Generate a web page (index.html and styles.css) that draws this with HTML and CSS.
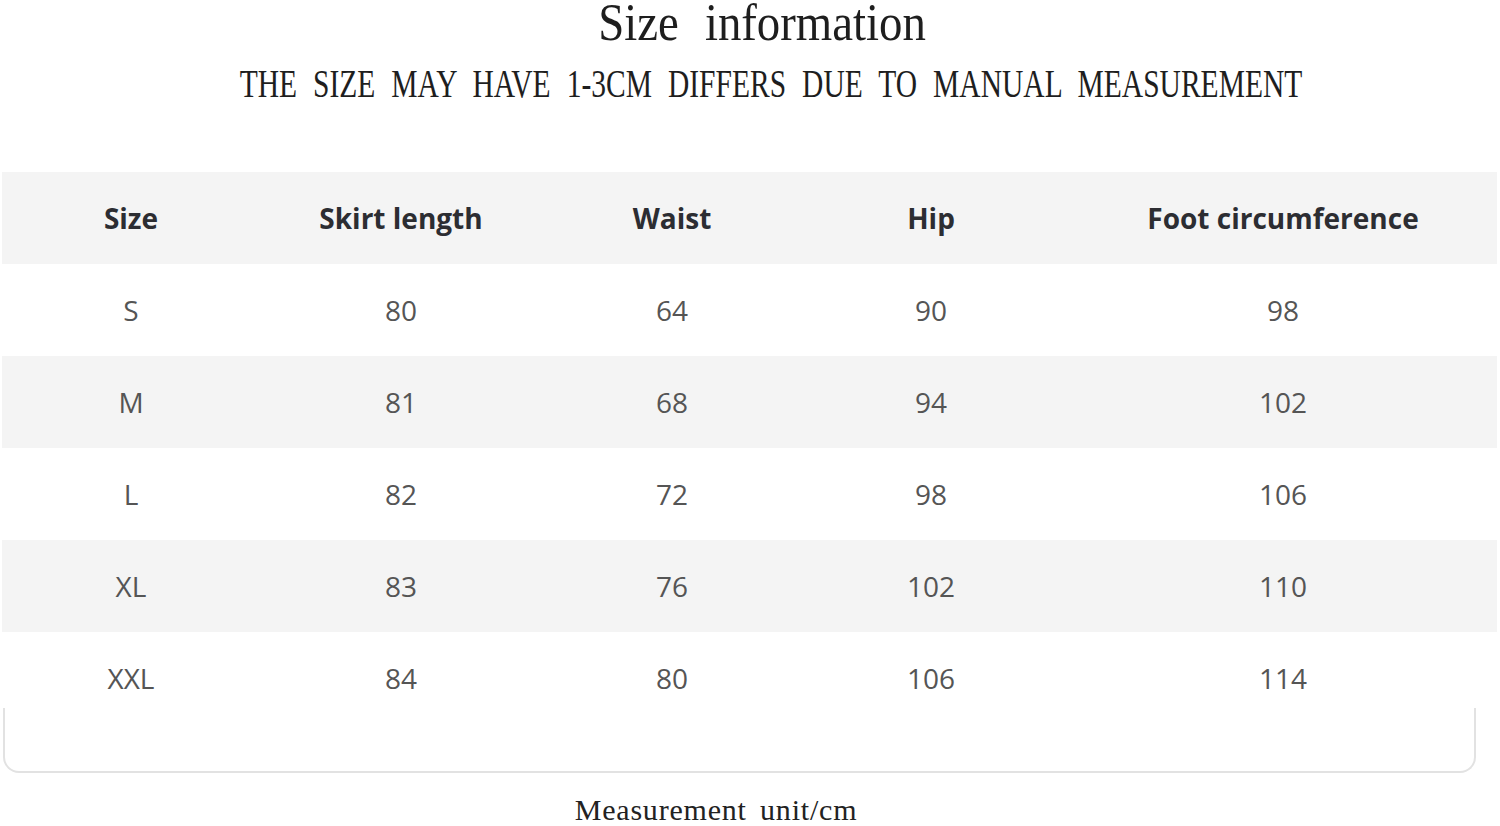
FILE: index.html
```html
<!DOCTYPE html>
<html lang="en">
<head>
<meta charset="utf-8">
<title>Size information</title>
<link rel="stylesheet" href="styles.css">
</head>
<body>
<div class="page">
  <div class="title"><span class="title-text">Size information</span></div>
  <div class="subtitle"><span class="subtitle-text">THE SIZE MAY HAVE 1-3CM DIFFERS DUE TO MANUAL MEASUREMENT</span></div>

  <div class="table">
    <div class="row head">
      <div class="cell">Size</div>
      <div class="cell">Skirt length</div>
      <div class="cell">Waist</div>
      <div class="cell">Hip</div>
      <div class="cell last-col">Foot circumference</div>
    </div>
    <div class="row">
      <div class="cell">S</div><div class="cell">80</div><div class="cell">64</div><div class="cell">90</div><div class="cell last-col">98</div>
    </div>
    <div class="row alt">
      <div class="cell">M</div><div class="cell">81</div><div class="cell">68</div><div class="cell">94</div><div class="cell last-col">102</div>
    </div>
    <div class="row">
      <div class="cell">L</div><div class="cell">82</div><div class="cell">72</div><div class="cell">98</div><div class="cell last-col">106</div>
    </div>
    <div class="row alt">
      <div class="cell">XL</div><div class="cell">83</div><div class="cell">76</div><div class="cell">102</div><div class="cell last-col">110</div>
    </div>
    <div class="row final">
      <div class="cell">XXL</div><div class="cell">84</div><div class="cell">80</div><div class="cell">106</div><div class="cell last-col">114</div>
    </div>
  </div>
  <div class="box"></div>

  <div class="footer"><span class="footer-text">Measurement unit/cm</span></div>
</div>
</body>
</html>
```

FILE: styles.css
```css
html, body {
  margin: 0;
  padding: 0;
  background: #ffffff;
}

.page {
  width: 1500px;
  height: 826px;
  overflow: hidden;
  font-family: "Open Sans", "DejaVu Sans", sans-serif;
}

.title,
.subtitle,
.footer {
  display: flex;
  justify-content: center;
  white-space: nowrap;
}

.title {
  height: 44px;
  line-height: 46px;
  padding-left: 24px;
}

.title-text {
  display: inline-block;
  font-family: "Liberation Serif", serif;
  font-size: 52px;
  word-spacing: 16px;
  color: #1e1e1e;
  transform: scaleX(0.9);
}

.subtitle {
  margin-top: 19px;
  height: 40px;
  line-height: 40px;
  padding-left: 42px;
}

.subtitle-text {
  display: inline-block;
  font-family: "Liberation Serif", serif;
  font-size: 41px;
  word-spacing: 12px;
  color: #1e1e1e;
  transform: scaleX(0.72);
}

.table {
  margin-top: 69px;
  margin-left: 2px;
  width: 1495px;
}

.row {
  display: grid;
  grid-template-columns: 258px 282px 260px 258px 1fr;
  height: 92px;
  align-items: center;
  background: #ffffff;
  color: #555555;
  font-size: 28px;
}

.row.head,
.row.alt {
  background: #f4f4f4;
}

.row.head {
  color: #2c2d32;
  font-weight: 700;
  font-size: 28px;
}

.row.final {
  margin-bottom: -16px;
}

.cell {
  text-align: center;
}

.cell.last-col {
  padding-left: 9px;
}

.box {
  margin-left: 3px;
  width: 1469px;
  height: 63px;
  border: 2px solid #e2e2e2;
  border-top: none;
  border-radius: 0 0 16px 16px;
}

.footer {
  margin-top: 17px;
  height: 40px;
  line-height: 40px;
  padding-right: 68px;
}

.footer-text {
  display: inline-block;
  font-family: "Liberation Serif", serif;
  font-size: 30px;
  letter-spacing: 0.8px;
  word-spacing: 5px;
  color: #222222;
}
```
